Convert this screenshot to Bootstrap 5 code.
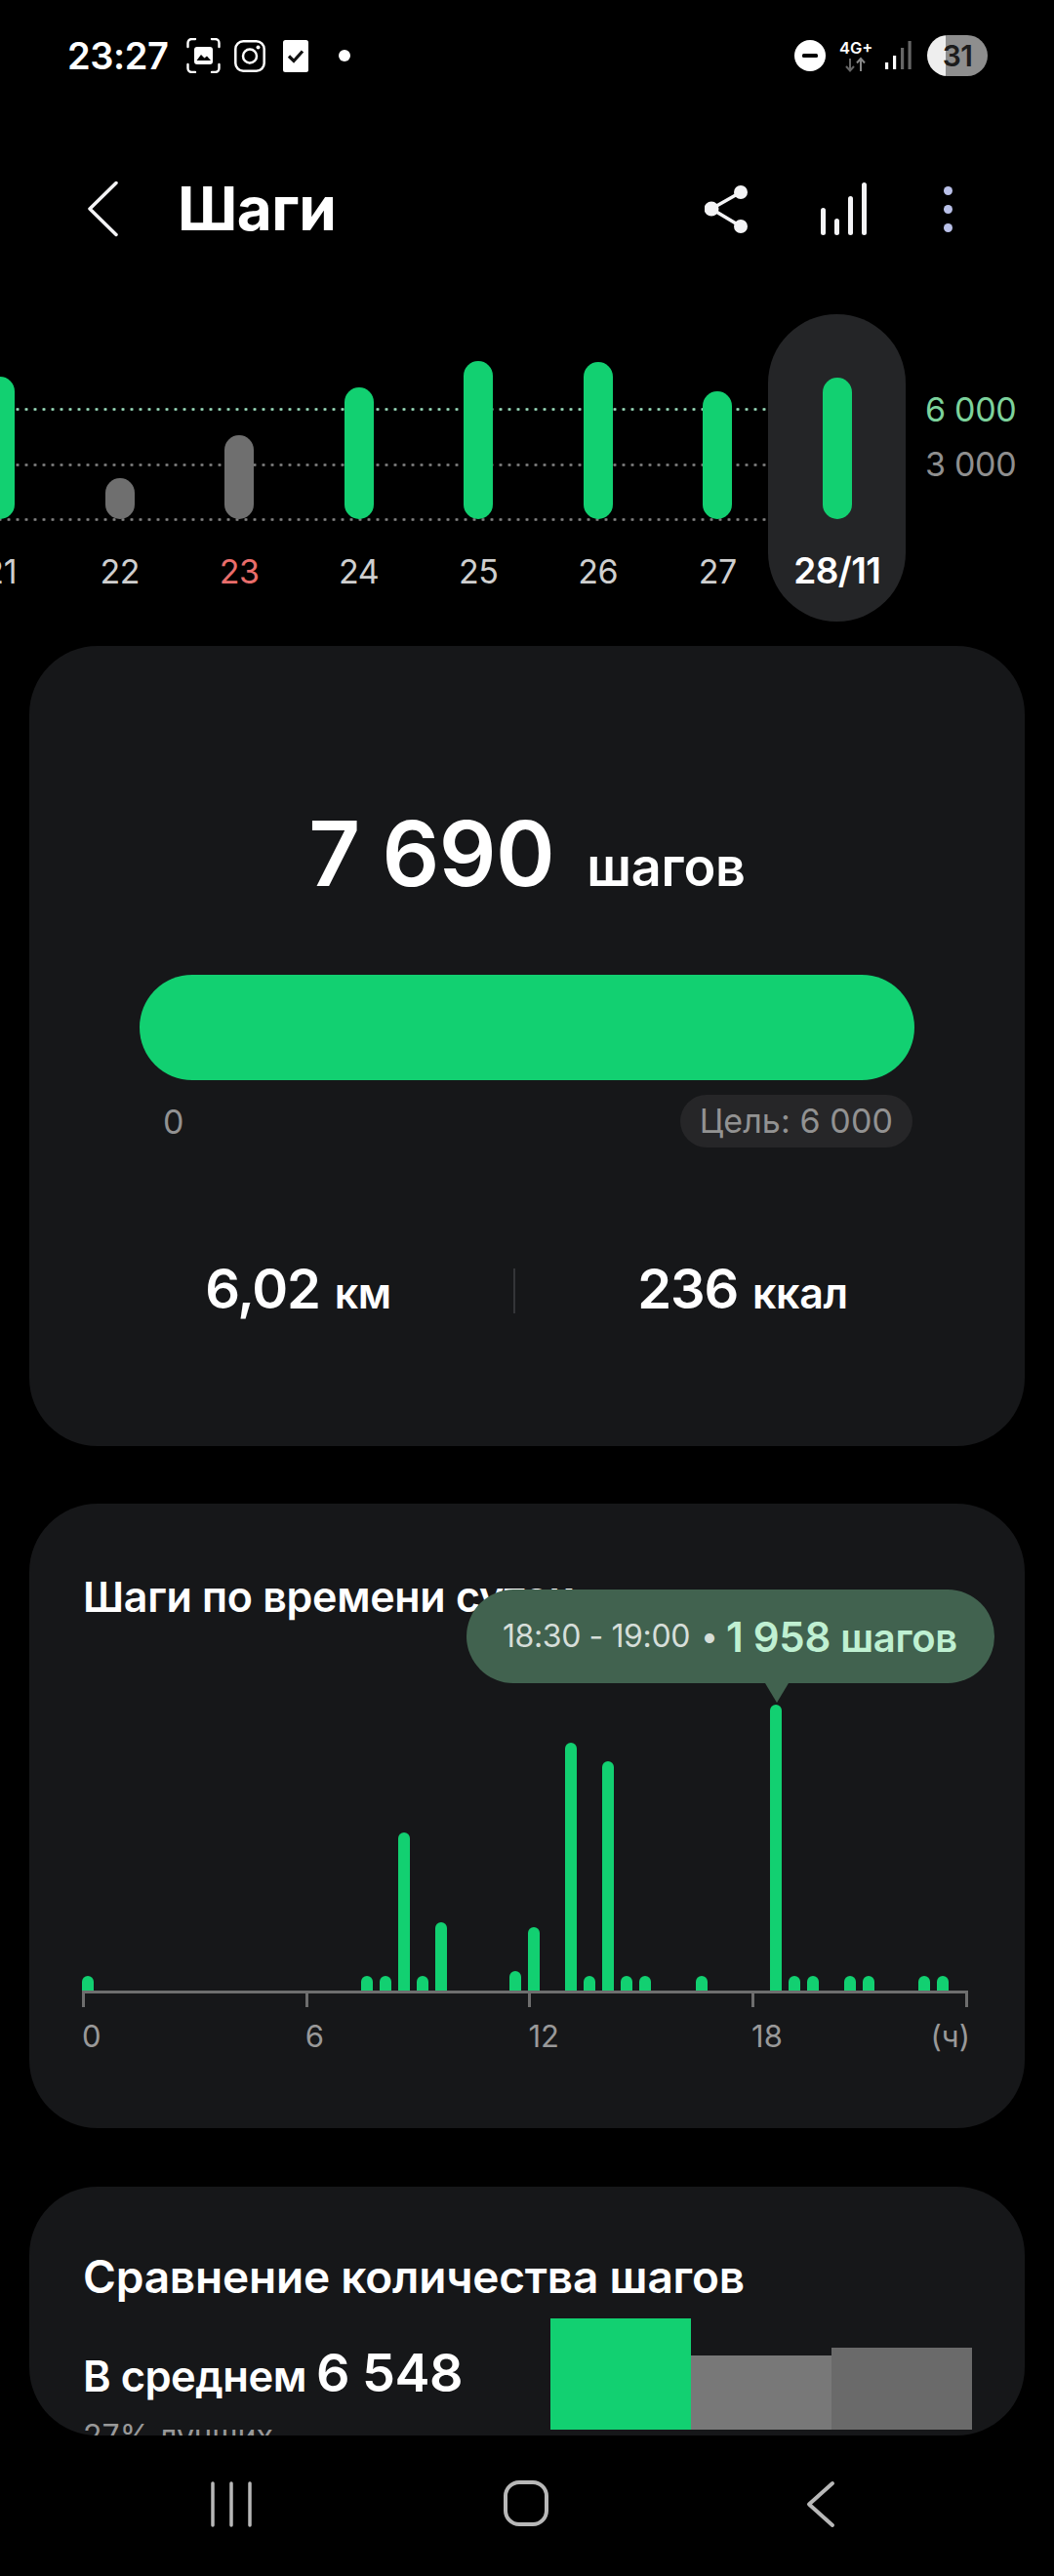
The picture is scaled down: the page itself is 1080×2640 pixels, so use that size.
<!DOCTYPE html>
<html lang="ru">
<head>
<meta charset="utf-8">
<title>Шаги</title>
<link href="https://cdn.jsdelivr.net/npm/bootstrap@5.3.0/dist/css/bootstrap.min.css" rel="stylesheet">
<style>
html,body{background:#000;margin:0}
body{width:1080px;height:2640px;overflow:hidden;font-family:Inter,"Noto Sans",sans-serif;color:#fff}
.status-row{height:147px;padding:35px 68px 0 69px;align-items:flex-start}
.clock{font-size:38px;font-weight:600;line-height:44px;width:122px;letter-spacing:-.4px}
.st-ic{display:block;flex:none}
.i-frame{margin-top:4px}
.i-insta{margin:6px 0 0 14px}
.i-check{margin:6px 0 0 18px}
.i-dot{margin:16px 0 0 31px}
.i-dnd{margin-top:6px}
.i-net{margin:6px 0 0 14px}
.i-sig{margin:7px 0 0 12px}
.batt{width:62px;height:42px;margin-top:1px;border-radius:21px;background:linear-gradient(90deg,#eee 0,#eee 19px,#8e8e8e 19px);color:#1c1c1c;font-size:30px;font-weight:600;line-height:42px;text-align:center;letter-spacing:-.6px}
.appbar{height:134px;padding:0 104.5px 0 90px;align-items:center}
.ttl{font-size:62px;font-weight:700;margin:0 0 0 60px;line-height:1;letter-spacing:-.5px;flex:1}
.i-stats{margin-left:72.5px}
.i-more{margin-left:79px}
.trend{height:381px;overflow:hidden;position:relative}
.days{margin-left:-61px}
.dayc{width:122.5px;flex:none;position:relative;text-align:center}
.pillbg{position:absolute;left:787px;top:41px;width:141px;height:315px;border-radius:71px;background:#242527}
.plot{height:251px;display:flex;align-items:flex-end;justify-content:center;position:relative;z-index:2}
.dbar{width:30px;border-radius:15px;background:#12d071}
.dbar.off{background:#6f6f6f}
.dlab{font-size:34px;line-height:40px;margin-top:34px;color:#cfcfcf;position:relative;z-index:2;letter-spacing:-.4px;white-space:nowrap}
.dlab.red{color:#e96d6b}
.dlab.sel{color:#fff;font-weight:600;font-size:37px;margin-top:33px;letter-spacing:-.6px}
.gline{position:absolute;left:0;width:785px;height:3px;background-image:radial-gradient(circle at 1.5px 1.5px,#7f7f7f 1.3px,transparent 1.6px);background-size:9px 3px;background-position:-1.5px 0}
.gline.top{background-image:radial-gradient(circle at 1.5px 1.5px,#97d9b9 1.3px,transparent 1.6px)}
.g1{top:137px}.g2{top:194px}.g3{top:250px}
.ylab{position:absolute;left:948px;font-size:34px;line-height:40px;color:#8f8f8f;letter-spacing:-.3px}
.ylab.top{color:#7dd39c}
.y1{top:119px}.y2{top:175px}
.sheet{background:#161719;border-radius:70px;margin:0 30px;border:0;color:#fff}
.sheet-a{height:820px}
.bigrow{padding-top:157px;height:337px;white-space:nowrap}
.bign{font-size:92px;font-weight:600;line-height:112px;letter-spacing:-.5px}
.bigu{font-size:54px;font-weight:600;margin-left:33px;letter-spacing:-.2px}
.goalbar{height:108px;margin:0 113px;background:#12d071;border-radius:54px}
.goalfoot{margin:15px 115px 0 137px;align-items:center}
.zero{font-size:34px;color:#929292}
.goalchip{background:#262628;color:#929292;font-size:34px;height:54px;line-height:54px;padding:0 20px;border-radius:27px;letter-spacing:.1px}
.stats{margin-top:112px;padding-left:55px;align-items:center}
.stat{text-align:center;font-weight:600;font-size:56px;line-height:66px;letter-spacing:-1.2px}
.stat small{font-size:43px;font-weight:600;margin-left:2px;letter-spacing:-.4px}
.stat-l{width:441px}
.stat-r{width:466px}
.vrule{width:2px;height:46px;background:#343538;flex:none}
.sheet-b{height:640px;margin-top:59px;position:relative}
.sect{font-size:43px;font-weight:600;line-height:52px;letter-spacing:-.3px;margin:0}
.sect-b{margin:69px 0 0 55px;height:52px;white-space:nowrap}
.sect-c{font-size:46px;margin-bottom:43px;white-space:nowrap;letter-spacing:-.2px}
.tip{position:absolute;left:448px;top:88px;width:541px;height:96px;border-radius:48px;background:#41624f;display:flex;align-items:center;padding-left:37px;white-space:nowrap}
.tip::after{content:"";position:absolute;left:306px;top:96px;border-left:12px solid transparent;border-right:12px solid transparent;border-top:20px solid #41624f}
.tip-t{font-size:32px;color:#d6ded9;letter-spacing:-.4px}
.tip-d{font-size:32px;color:#d6ded9;margin:0 8px 0 11px}
.tip-v{font-size:42px;font-weight:600;color:#bff0d2;letter-spacing:-.3px}
.tip-v small{font-size:40px;font-weight:600}
.hours{margin:0 0 0 54px;width:916px;height:378px;display:grid;grid-template-columns:repeat(48,19.06px);align-items:end}
.hbar{width:12px;border-radius:6px 6px 0 0;background:#12d071;grid-row:1}
.axis{margin-left:54px;width:908px;height:3px;background:#6e6e6e}
.ticks{margin-left:54px}
.tk{width:3px;height:14px;background:#6e6e6e;flex:none;margin-right:225.7px}
.tk:nth-child(4){margin-right:216px}
.tk:last-child{margin-right:0}
.alabs{margin:10px 0 0 54px;width:910px;font-size:31px;line-height:40px;color:#999}
.alabs span{display:block;flex:none;width:228.7px}
.alabs span.wide{flex:1;width:auto}
.alabs span.lst{width:auto}
.sheet-c{height:255px;margin-top:60px;overflow:hidden}
.cmp-l{width:534px;padding:66px 0 0 55px;flex:none}
.cmp-row{font-weight:600;font-size:43.500px;line-height:60px;letter-spacing:-.5px;white-space:nowrap}
.cmp-row b{font-size:54px;font-weight:600;margin-left:10px}
.cmp-sub{font-size:32px;color:#999;line-height:40px;margin-top:12px}
.cmp-bars{height:249px}
.cb{width:144px}
.cb-a{background:#12d071}.cb-b{background:#787878}.cb-c{background:#6a6a6a}
.botnav{margin-top:46px}
</style>
</head>
<body>
<div class="d-flex status-row">
  <div class="clock">23:27</div>
  <svg class="st-ic i-frame" width="35" height="36" viewBox="0 0 35 36"><g fill="none" stroke="#fff" stroke-width="2.4" stroke-linecap="round"><path d="M1.500 9V5a4 4 0 0 1 4-4H9M26 1h3.500a4 4 0 0 1 4 4v4M33.500 27v4a4 4 0 0 1-4 4H26M9 35H5.500a4 4 0 0 1-4-4v-4"/></g><path d="M11 9h13a3 3 0 0 1 3 3v12a3 3 0 0 1-3 3H11a3 3 0 0 1-3-3V12a3 3 0 0 1 3-3z" fill="#fff"/><path d="M10.500 23l4.500-6 3.500 3.500 2.500-2 4 4.500z" fill="#000"/></svg>
  <svg class="st-ic i-insta" width="32" height="33" viewBox="0 0 32 33"><rect x="1.300" y="1.300" width="29.400" height="30.400" rx="8" fill="none" stroke="#fff" stroke-width="2.500"/><circle cx="16" cy="16.500" r="7" fill="none" stroke="#fff" stroke-width="2.500"/><circle cx="24.500" cy="7.500" r="2" fill="#fff"/></svg>
  <svg class="st-ic i-check" width="26" height="33" viewBox="0 0 26 33"><rect width="26" height="33" rx="2.500" fill="#fff"/><path d="M6 16.500l5 5 9-10" fill="none" stroke="#111" stroke-width="3.200"/></svg>
  <svg class="st-ic i-dot" width="12" height="12" viewBox="0 0 12 12"><circle cx="6" cy="6" r="6" fill="#fff"/></svg>
  <div class="flex-grow-1"></div>
  <svg class="st-ic i-dnd" width="32" height="32" viewBox="0 0 32 32"><circle cx="16" cy="16" r="16" fill="#fff"/><rect x="8" y="14" width="16" height="4" rx="1.500" fill="#000"/></svg>
  <svg class="st-ic i-net" width="34" height="34" viewBox="0 0 34 34"><text x="0" y="14" font-family="Inter,sans-serif" font-size="16.500" font-weight="600" fill="#fff">4G+</text><path d="M11 19v12M7 27l4 4.500 4-4.500" fill="none" stroke="#666" stroke-width="2"/><path d="M22 32V19.500M18 23.500l4-4.500 4 4.500" fill="none" stroke="#888" stroke-width="2"/></svg>
  <svg class="st-ic i-sig" width="28" height="30" viewBox="0 0 28 30"><rect x="1" y="22" width="3.200" height="7" fill="#fff"/><rect x="9" y="15" width="3.200" height="14" fill="#fff"/><rect x="17" y="7" width="3.200" height="22" fill="#666"/><rect x="24.500" y="0" width="3.200" height="29" fill="#666"/></svg>
  <div class="batt ms-3">31</div>
</div>

<div class="d-flex appbar">
  <svg width="32" height="58" viewBox="0 0 32 58"><path d="M29 2.500L2 29l27 26.500" fill="none" stroke="#f4f4f6" stroke-width="3.500" stroke-linecap="round" stroke-linejoin="round"/></svg>
  <h1 class="ttl">Шаги</h1>
  <svg width="46" height="50" viewBox="0 0 46 50"><path d="M37 8L7 25l30 18" fill="none" stroke="#f4f4f6" stroke-width="3.500"/><circle cx="37" cy="8" r="7" fill="#f4f4f6"/><circle cx="7" cy="25" r="7.500" fill="#f4f4f6"/><circle cx="37" cy="43" r="7" fill="#f4f4f6"/></svg>
  <svg class="i-stats" width="47" height="54" viewBox="0 0 47 54"><g fill="#f4f4f6"><rect x="0" y="26" width="5" height="28" rx="2.500"/><rect x="14" y="37" width="5" height="17" rx="2.500"/><rect x="28" y="14" width="5" height="40" rx="2.500"/><rect x="42" y="0" width="5" height="54" rx="2.500"/></g></svg>
  <svg class="i-more" width="9" height="47" viewBox="0 0 9 47"><g fill="#bac1e9"><circle cx="4.500" cy="4.500" r="4.500"/><circle cx="4.500" cy="23.500" r="4.500"/><circle cx="4.500" cy="42.500" r="4.500"/></g></svg>
</div>

<div class="trend">
  <div class="pillbg"></div>
  <div class="gline top g1"></div>
  <div class="gline g2"></div>
  <div class="gline g3"></div>
  <div class="ylab top y1">6 000</div>
  <div class="ylab y2">3 000</div>
  <div class="d-flex days">
    <div class="dayc"><div class="plot"><div class="dbar" style="height:146px"></div></div><div class="dlab">21</div></div>
    <div class="dayc"><div class="plot"><div class="dbar off" style="height:42px"></div></div><div class="dlab">22</div></div>
    <div class="dayc"><div class="plot"><div class="dbar off" style="height:86px"></div></div><div class="dlab red">23</div></div>
    <div class="dayc"><div class="plot"><div class="dbar" style="height:135px"></div></div><div class="dlab">24</div></div>
    <div class="dayc"><div class="plot"><div class="dbar" style="height:162px"></div></div><div class="dlab">25</div></div>
    <div class="dayc"><div class="plot"><div class="dbar" style="height:161px"></div></div><div class="dlab">26</div></div>
    <div class="dayc"><div class="plot"><div class="dbar" style="height:131px"></div></div><div class="dlab">27</div></div>
    <div class="dayc"><div class="plot"><div class="dbar" style="height:145px"></div></div><div class="dlab sel">28/11</div></div>
  </div>
</div>

<div class="card sheet sheet-a">
  <div class="bigrow text-center"><span class="bign">7 690</span><span class="bigu">шагов</span></div>
  <div class="goalbar"></div>
  <div class="d-flex justify-content-between goalfoot"><span class="zero">0</span><span class="goalchip">Цель: 6 000</span></div>
  <div class="d-flex stats">
    <div class="stat stat-l">6,02 <small>км</small></div>
    <div class="vrule"></div>
    <div class="stat stat-r">236 <small>ккал</small></div>
  </div>
</div>

<div class="card sheet sheet-b">
  <h2 class="sect sect-b">Шаги по времени суток</h2>
  <div class="tip"><span class="tip-t">18:30 - 19:00</span><span class="tip-d">•</span><span class="tip-v">1 958 <small>шагов</small></span></div>
  <div class="hours">
    <div class="hbar" style="grid-column:1;height:15px"></div>
    <div class="hbar" style="grid-column:16;height:15px"></div>
    <div class="hbar" style="grid-column:17;height:15px"></div>
    <div class="hbar" style="grid-column:18;height:162px"></div>
    <div class="hbar" style="grid-column:19;height:15px"></div>
    <div class="hbar" style="grid-column:20;height:70px"></div>
    <div class="hbar" style="grid-column:24;height:20px"></div>
    <div class="hbar" style="grid-column:25;height:65px"></div>
    <div class="hbar" style="grid-column:27;height:254px"></div>
    <div class="hbar" style="grid-column:28;height:15px"></div>
    <div class="hbar" style="grid-column:29;height:235px"></div>
    <div class="hbar" style="grid-column:30;height:15px"></div>
    <div class="hbar" style="grid-column:31;height:15px"></div>
    <div class="hbar" style="grid-column:34;height:15px"></div>
    <div class="hbar" style="grid-column:38;height:293px"></div>
    <div class="hbar" style="grid-column:39;height:15px"></div>
    <div class="hbar" style="grid-column:40;height:15px"></div>
    <div class="hbar" style="grid-column:42;height:15px"></div>
    <div class="hbar" style="grid-column:43;height:15px"></div>
    <div class="hbar" style="grid-column:46;height:15px"></div>
    <div class="hbar" style="grid-column:47;height:15px"></div>
  </div>
  <div class="axis"></div>
  <div class="d-flex ticks"><i class="tk"></i><i class="tk"></i><i class="tk"></i><i class="tk"></i><i class="tk"></i></div>
  <div class="d-flex alabs"><span>0</span><span>6</span><span>12</span><span class="wide">18</span><span class="lst">(ч)</span></div>
</div>

<div class="card sheet sheet-c">
  <div class="d-flex">
    <div class="cmp-l">
      <h2 class="sect sect-c">Сравнение количества шагов</h2>
      <div class="cmp-row">В среднем<b>6 548</b></div>
      <div class="cmp-sub">27% лучших</div>
    </div>
    <div class="d-flex align-items-end cmp-bars">
      <div class="cb cb-a" style="height:114px"></div>
      <div class="cb cb-b" style="height:76px"></div>
      <div class="cb cb-c" style="height:84px"></div>
    </div>
  </div>
</div>

<div class="botnav">
  <svg class="d-block" width="1080" height="52" viewBox="0 0 1080 52"><g fill="none" stroke="#b8b8b8" stroke-linecap="round" stroke-linejoin="round"><path stroke-width="3.500" d="M218 3v43M237 3v43M256 3v43"/><rect stroke-width="4" x="518" y="2" width="42" height="43" rx="14"/><path stroke-width="4" d="M853 3L829 24.500 853 46"/></g></svg>
</div>
<script src="https://cdn.jsdelivr.net/npm/bootstrap@5.3.0/dist/js/bootstrap.bundle.min.js"></script>
</body>
</html>
